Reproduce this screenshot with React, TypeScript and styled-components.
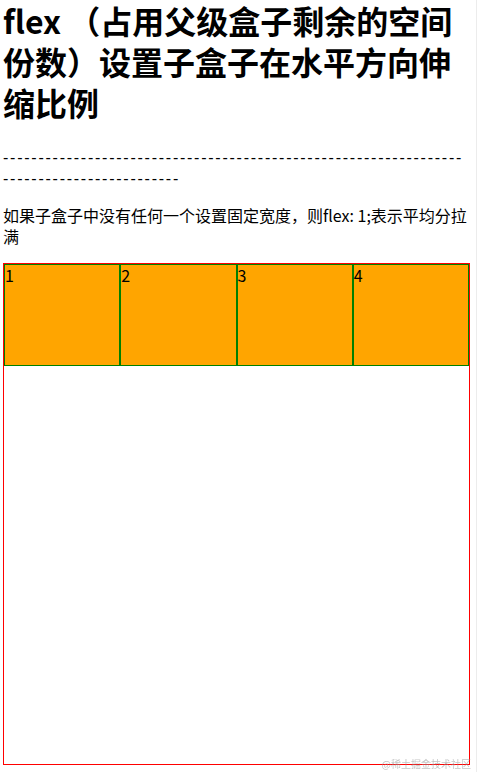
import styled, { createGlobalStyle } from 'styled-components'

const GlobalStyle = createGlobalStyle`
  html, body {
    background: #fff;
  }
  body {
    margin: 0 0 0 3px;
    color: #000;
    font-family: "Noto Sans CJK SC", "Noto Sans", sans-serif;
  }
  #root {
    width: 467px;
  }
  body::after {
    content: '';
    position: fixed;
    top: 0;
    bottom: 0;
    right: 2px;
    width: 1px;
    background: #ececec;
  }
`

const Title = styled.h1`
  margin: 0 0 24px 0;
  font-size: 32px;
  font-weight: 700;
  line-height: 41px;
`

const Divider = styled.p`
  margin: 0;
  font-family: "Liberation Sans", Arial, sans-serif;
  font-size: 16px;
  line-height: 21px;
  letter-spacing: 1.75px;
  word-break: break-all;
`

const Note = styled.p`
  margin: 16px 0 16px 0;
  font-size: 16px;
  line-height: 21px;
`

const FlexBox = styled.div`
  display: flex;
  height: 500px;
  border: 1px solid red;
`

const Cell = styled.span`
  flex: 1;
  height: 100px;
  border: 1px solid green;
  background-color: orange;
  font-size: 16px;
  line-height: 21px;
`

const Watermark = styled.div`
  position: fixed;
  right: 8px;
  bottom: 2px;
  font-size: 10px;
  line-height: 13px;
  color: rgba(150, 150, 150, 0.55);
`

const cells = ['1', '2', '3', '4']

export default function App() {
  return (
    <>
      <GlobalStyle />
      <Title>flex （占用父级盒子剩余的空间份数）设置子盒子在水平方向伸缩比例</Title>
      <Divider>{'-'.repeat(90)}</Divider>
      <Note>如果子盒子中没有任何一个设置固定宽度，则flex: 1;表示平均分拉满</Note>
      <FlexBox>
        {cells.map((c) => (
          <Cell key={c}>{c}</Cell>
        ))}
      </FlexBox>
      <Watermark>@稀土掘金技术社区</Watermark>
    </>
  )
}
